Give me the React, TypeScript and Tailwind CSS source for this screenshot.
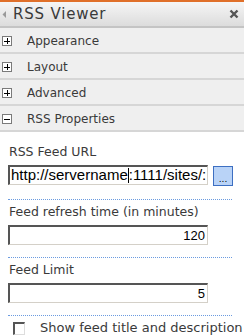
import React from "react";

const Plus = ({ minus }: { minus?: boolean }) => (
  <div className="w-[10px] h-[10px] border border-[#7a7a7a] bg-white relative">
    <div className="absolute w-[6px] h-[1px] bg-black left-[1px] top-[3.5px]" />
    {!minus && <div className="absolute w-[1px] h-[6px] bg-black left-[3.5px] top-[1px]" />}
  </div>
);

const Section = ({ label, minus }: { label: string; minus?: boolean }) => (
  <div className="h-[26px] pt-[2px] bg-[#efefef] border-b-2 border-[#d6d6d6] flex items-center">
    <div className="ml-[2px]">
      <Plus minus={minus} />
    </div>
    <span className="ml-[15px] text-[12px] leading-[16px] text-[#3a3a3a]">{label}</span>
  </div>
);

const Dotted = () => (
  <div className="ml-[8px] w-[224px] border-t border-dotted border-[#6b9be0] h-0" />
);

const Field = ({ value }: { value: string }) => (
  <div className="w-[200px] h-[20px] border-t-2 border-l-2 border-t-[#555] border-l-[#555] border-b border-r border-b-[#d4d0c8] border-r-[#d4d0c8] bg-white flex items-center justify-end pr-[2px] text-[13px] text-black font-['Liberation_Sans',sans-serif]">
    {value}
  </div>
);

export default function App() {
  return (
    <div className="w-[244px] h-[335px] bg-white overflow-hidden font-['DejaVu_Sans',sans-serif] text-[#3a3a3a]">
      <div className="h-[2px] bg-[#e0702a]" />
      <div className="h-[26px] bg-gradient-to-b from-[#f6f6f6] to-[#dcdcdc] border-b-2 border-[#c4c4c4] flex items-center">
        <svg width="4" height="7" viewBox="0 0 4 7" className="ml-[2px]">
          <polygon points="4,0 4,7 0.5,3.5" fill="#9a9a9a" />
        </svg>
        <span className="ml-[7px] text-[15px] leading-[18px] tracking-[0.8px] text-[#3a3a3a]">RSS Viewer</span>
        <div className="flex-1" />
        <svg width="10" height="10" viewBox="0 0 10 10" className="mr-[5px]">
          <path d="M1.5 1.5 L8.5 8.5 M8.5 1.5 L1.5 8.5" stroke="#555" strokeWidth="2.4" />
        </svg>
      </div>
      <Section label="Appearance" />
      <Section label="Layout" />
      <Section label="Advanced" />
      <Section label="RSS Properties" minus />
      <div className="pt-[11px]">
        <div className="ml-[9px] text-[12.5px] leading-[18px]">RSS Feed URL</div>
        <div className="ml-[8px] mt-[4px] flex items-start">
          <div className="w-[200px] h-[20px] border-t-2 border-l-2 border-t-[#555] border-l-[#555] border-b border-r border-b-[#d4d0c8] border-r-[#d4d0c8] bg-white flex items-center pl-[1px] text-[15px] text-black font-['Liberation_Sans',sans-serif] overflow-hidden whitespace-nowrap">
            http://servername<span className="inline-block w-[1px] h-[15px] bg-black" />:1111/sites/:
          </div>
          <div className="ml-[5px] mt-[1px] w-[20px] h-[20px] bg-[#b9d3f7] border border-[#3d6fc2] flex items-end justify-center text-[9px] leading-[12px] text-black">
            ...
          </div>
        </div>
        <div className="mt-[13px]">
          <Dotted />
        </div>
        <div className="ml-[9px] mt-[3px] text-[12.5px] leading-[18px]">Feed refresh time (in minutes)</div>
        <div className="ml-[8px] mt-[4px]">
          <Field value="120" />
        </div>
        <div className="mt-[12px]">
          <Dotted />
        </div>
        <div className="ml-[9px] mt-[3px] text-[12.5px] leading-[18px]">Feed Limit</div>
        <div className="ml-[8px] mt-[4px]">
          <Field value="5" />
        </div>
        <div className="mt-[12px]">
          <Dotted />
        </div>
        <div className="flex items-start mt-[4px]">
          <div className="ml-[13px] mt-[2px] w-[12px] h-[13px] border-t-2 border-l-2 border-t-[#555] border-l-[#555] border-b border-r border-b-[#ddd] border-r-[#ddd] bg-white" />
          <span className="ml-[15px] text-[13px] leading-[16px] whitespace-nowrap">Show feed title and description</span>
        </div>
      </div>
    </div>
  );
}
